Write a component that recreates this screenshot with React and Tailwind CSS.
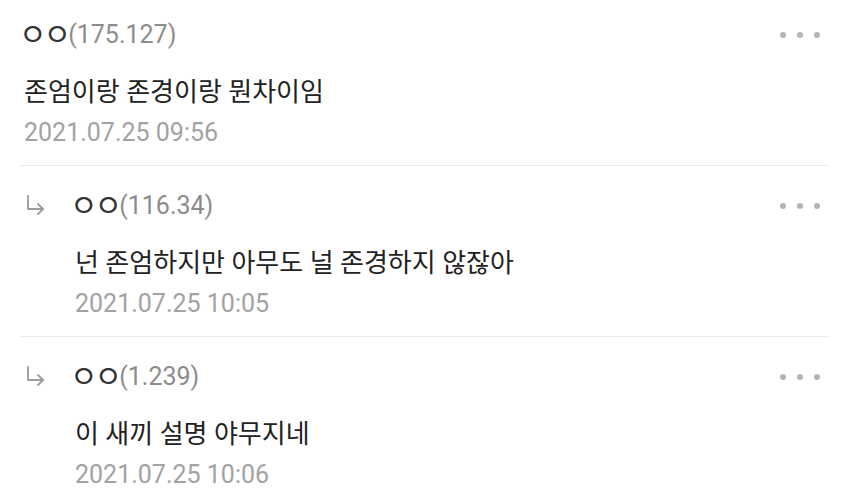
const comments = [
  { ip: '175.127', text: '존엄이랑 존경이랑 뭔차이임', date: '2021.07.25 09:56', reply: false },
  { ip: '116.34', text: '넌 존엄하지만 아무도 널 존경하지 않잖아', date: '2021.07.25 10:05', reply: true },
  { ip: '1.239', text: '이 새끼 설명 야무지네', date: '2021.07.25 10:06', reply: true },
];

const font = { fontFamily: 'Roboto, "Noto Sans CJK KR", sans-serif' };

function ReplyArrow() {
  return (
    <svg width="20" height="24" viewBox="0 0 20 24" fill="none" stroke="#9c9c9c" strokeWidth="1.8" strokeLinecap="round" strokeLinejoin="round">
      <path d="M2 2v13h15" />
      <path d="M12 10l5 5-5 5" />
    </svg>
  );
}

function MoreDots() {
  return (
    <div className="flex items-center gap-[11px] pr-[30px]">
      <span className="w-[6px] h-[6px] rounded-full bg-[#b4b4b4]" />
      <span className="w-[6px] h-[6px] rounded-full bg-[#b4b4b4]" />
      <span className="w-[6px] h-[6px] rounded-full bg-[#b4b4b4]" />
    </div>
  );
}

function Comment({ ip, text, date, reply, last }) {
  return (
    <div>
      <div className={`flex ${reply ? 'pt-[26px]' : 'pt-[21px]'} pb-[18px]`}>
        {reply && (
          <div className="w-[75px] shrink-0 pl-[26px] h-[28px] flex items-center">
            <ReplyArrow />
          </div>
        )}
        <div className={`flex-1 ${reply ? '' : 'pl-[24px]'}`}>
          <div className="h-[28px] flex items-center justify-between">
            <div className="text-[25px] leading-[28px] flex items-center">
              <span className="text-[#333] text-[30px] leading-[28px] tracking-[-3px] ml-[-5px]">ㅇㅇ</span>
              <span className="text-[#8c8c8c]">({ip})</span>
            </div>
            <MoreDots />
          </div>
          <div className="mt-[25px] text-[26px] leading-[36px] text-[#222]">{text}</div>
          <div className="mt-[9px] text-[25px] leading-[28px] text-[#a2a2a2]">{date}</div>
        </div>
      </div>
      {!last && <div className="mx-[20px] h-px bg-[#ebebeb]" />}
    </div>
  );
}

export default function App() {
  return (
    <div className="w-[850px] h-[501px] bg-white overflow-hidden" style={font}>
      {comments.map((c, i) => (
        <Comment key={i} {...c} last={i === comments.length - 1} />
      ))}
    </div>
  );
}
